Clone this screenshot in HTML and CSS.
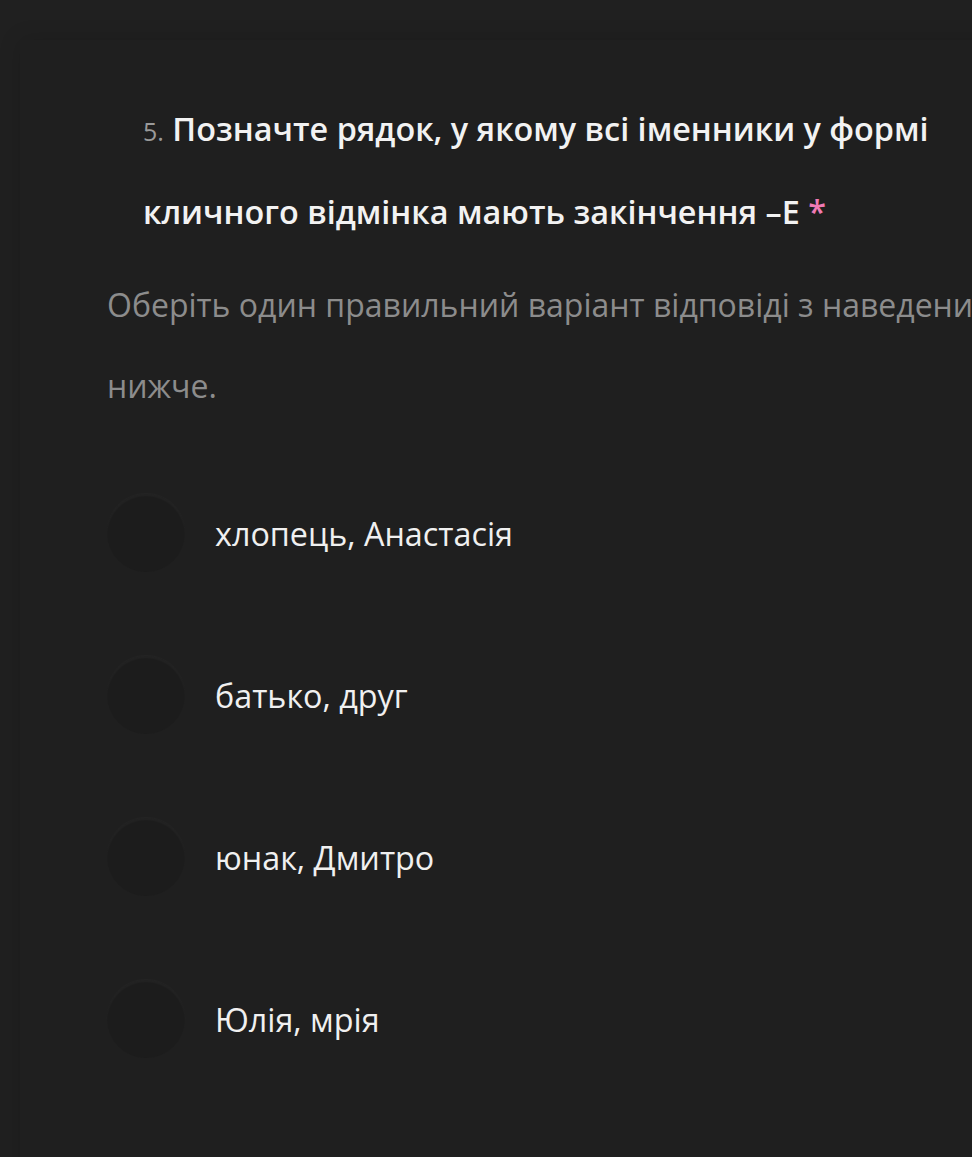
FILE: index.html
```html
<!DOCTYPE html>
<html lang="uk">
<head>
	<meta charset="UTF-8">
	<title>Питання 5</title>
	<link rel="stylesheet" href="styles.css">
</head>
<body>
	<div class="card">
		<div class="question">
			<span class="num">5.</span> Позначте рядок, у якому всі іменники у формі кличного відмінка мають закінчення –Е <span class="req">*</span>
		</div>
		<div class="hint">Оберіть один правильний варіант відповіді з наведених нижче.</div>
		<ul class="options">
			<li><span class="radio"></span><span class="label">хлопець, Анастасія</span></li>
			<li><span class="radio"></span><span class="label">батько, друг</span></li>
			<li><span class="radio"></span><span class="label">юнак, Дмитро</span></li>
			<li><span class="radio"></span><span class="label">Юлія, мрія</span></li>
		</ul>
	</div>
</body>
</html>
```

FILE: styles.css
```css
*{
	margin: 0;
	padding: 0;
}
html,
body{
	height: 100%;
	overflow: hidden;
	background: #202020;
}
body{
	font-family: "Open Sans", "Noto Sans", sans-serif;
	color: #f0f0f0;
}
ul li{
	list-style-type: none;
}
.card{
	margin: 40px 0 0 20px;
	padding: 48px 0 0 87px;
	width: 1100px;
	min-height: 1200px;
	background: #1f1f1f;
	box-shadow: 0 0 20px rgba(0,0,0,.15);
}
.question{
	margin-left: 36px;
	width: 830px;
	font-size: 32.4px;
	font-weight: 600;
	line-height: 80px;
	color: #f2f2f2;
}
.question .num{
	font-size: 25px;
	font-weight: 400;
	color: #9a9a9a;
}
.question .req{
	color: #f07ab4;
}
.hint{
	margin-top: 13px;
	width: 1000px;
	font-size: 32px;
	line-height: 81px;
	color: #8c8c8c;
}
.options{
	margin-top: 26px;
}
.options li{
	display: flex;
	align-items: center;
	height: 162px;
}
.radio{
	flex: none;
	width: 78px;
	height: 78px;
	border-radius: 50%;
	background: #1c1c1c;
	box-shadow: inset 0 2px 2px rgba(255,255,255,.03), 0 -1px 2px rgba(255,255,255,.03);
}
.label{
	margin-left: 30px;
	font-size: 32.3px;
	color: #f0f0f0;
}
```
